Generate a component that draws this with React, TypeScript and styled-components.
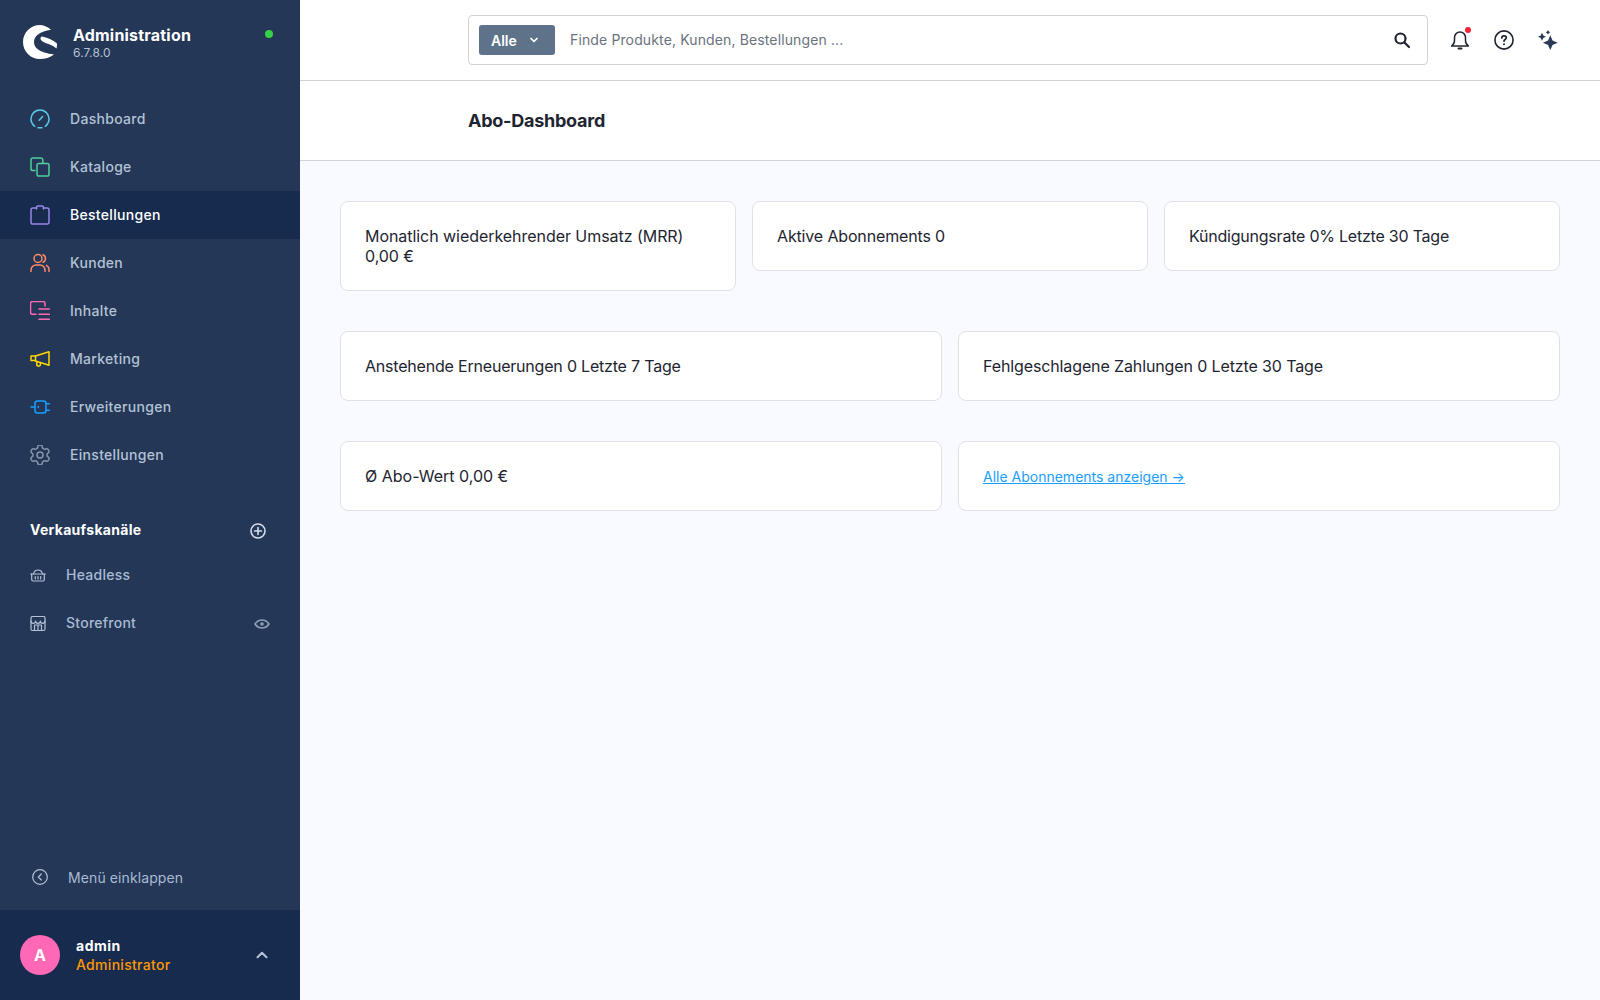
import styled, { createGlobalStyle } from "styled-components";
import type { ReactNode } from "react";
import { ChevronDown, ChevronUp, Settings } from "lucide-react";

const GlobalStyle = createGlobalStyle`
  html, body {
    margin: 0;
    padding: 0;
    height: 100%;
    font-family: Inter, "Noto Sans", sans-serif;
    color: #1e2530;
    background: #f9faff;
  }
  * { box-sizing: border-box; }
`;

const Layout = styled.div`
  display: flex;
  height: 100vh;
  overflow: hidden;
`;

const Sidebar = styled.aside`
  width: 300px;
  flex: none;
  display: flex;
  flex-direction: column;
  background: #243757;
`;

const Brand = styled.div`
  height: 95px;
  padding: 25px 27px 0 23px;
  display: flex;
  align-items: flex-start;
`;

const BrandText = styled.div`
  margin-left: 16px;
  flex: 1;
`;

const BrandName = styled.div`
  font-size: 16px;
  font-weight: 700;
  line-height: 20px;
  letter-spacing: 0.2px;
  color: #fff;
`;

const BrandVersion = styled.div`
  font-size: 12px;
  line-height: 16px;
  letter-spacing: 0.15px;
  color: #b3c2d6;
`;

const StatusDot = styled.span`
  width: 8px;
  height: 8px;
  margin-top: 5px;
  border-radius: 50%;
  background: #37d046;
`;

const NavItem = styled.div<{ $active?: boolean }>`
  height: 48px;
  padding-left: 30px;
  display: flex;
  align-items: center;
  gap: 20px;
  font-size: 14px;
  font-weight: 500;
  letter-spacing: 0.3px;
  color: ${(p) => (p.$active ? "#fff" : "#b3c2d6")};
  background: ${(p) => (p.$active ? "#172b4f" : "transparent")};
  svg {
    flex: none;
  }
`;

const NavLabel = styled.span`
  margin-bottom: 2px;
`;

const SectionHead = styled.div`
  margin-top: 30px;
  height: 43px;
  padding: 0 34px 0 30px;
  display: flex;
  align-items: center;
  justify-content: space-between;
  font-size: 14px;
  font-weight: 700;
  letter-spacing: 0.3px;
  color: #fff;
`;

const ChannelItem = styled.div`
  height: 48px;
  padding: 0 30px 0 30px;
  display: flex;
  align-items: center;
  gap: 20px;
  font-size: 14px;
  font-weight: 500;
  letter-spacing: 0.25px;
  color: #a9bbd3;
`;

const ChannelLabel = styled.span`
  flex: 1;
  margin-bottom: 4px;
`;

const Collapse = styled.div`
  margin-top: auto;
  height: 66px;
  padding-left: 32px;
  display: flex;
  align-items: center;
  gap: 20px;
  font-size: 14px;
  letter-spacing: 0.1px;
  color: #a9bbd3;
`;

const UserBar = styled.div`
  height: 90px;
  padding: 0 29px 0 20px;
  display: flex;
  align-items: center;
  background: #172b4f;
`;

const Avatar = styled.div`
  width: 40px;
  height: 40px;
  flex: none;
  border-radius: 50%;
  display: flex;
  align-items: center;
  justify-content: center;
  font-size: 16px;
  font-weight: 700;
  color: #fff;
  background: #ff68b4;
`;

const UserInfo = styled.div`
  flex: 1;
  margin-left: 16px;
`;

const UserName = styled.div`
  font-size: 14px;
  font-weight: 700;
  line-height: 19px;
  letter-spacing: 0.5px;
  color: #fff;
`;

const UserRole = styled.div`
  font-size: 14px;
  font-weight: 500;
  line-height: 19px;
  letter-spacing: 0.3px;
  color: #ff9800;
`;

const Main = styled.main`
  flex: 1;
  display: flex;
  flex-direction: column;
  min-width: 0;
`;

const TopBar = styled.header`
  height: 81px;
  flex: none;
  padding: 15px 32px 0 168px;
  display: flex;
  align-items: flex-start;
  background: #fff;
  border-bottom: 1px solid #d1d1d6;
`;

const SearchBox = styled.div`
  width: 960px;
  height: 50px;
  padding: 0 16px 0 10px;
  display: flex;
  align-items: center;
  border: 1px solid #d1d1d6;
  border-radius: 4px;
  background: #fff;
`;

const TypeButton = styled.div`
  width: 76px;
  height: 30px;
  padding: 0 15px 0 12px;
  display: flex;
  align-items: center;
  justify-content: space-between;
  border-radius: 3px;
  font-size: 14px;
  font-weight: 600;
  color: #fff;
  background: #5e7389;
`;

const Placeholder = styled.div`
  flex: 1;
  margin: 0 0 2px 15px;
  font-size: 14px;
  letter-spacing: 0.13px;
  color: #6b7280;
`;

const TopActions = styled.div`
  margin-left: 20px;
  height: 50px;
  display: flex;
  align-items: center;
  gap: 20px;
`;

const ActionIcon = styled.div`
  position: relative;
  width: 24px;
  height: 24px;
  display: flex;
  align-items: center;
  justify-content: center;
  color: #1e2530;
`;

const Badge = styled.span`
  position: absolute;
  top: -1px;
  right: 1px;
  width: 6px;
  height: 6px;
  border-radius: 50%;
  background: #f0252f;
`;

const PageHeader = styled.div`
  height: 80px;
  flex: none;
  padding-left: 168px;
  display: flex;
  align-items: center;
  background: #fff;
  border-bottom: 1px solid #d1d1d6;
`;

const PageTitle = styled.h1`
  margin: 0;
  font-size: 18px;
  font-weight: 700;
  letter-spacing: -0.25px;
  color: #1e2530;
`;

const Content = styled.div`
  flex: 1;
  padding: 40px;
  display: flex;
  flex-direction: column;
  gap: 40px;
  background: #f9faff;
`;

const CardRow = styled.div<{ $columns: number }>`
  display: grid;
  grid-template-columns: repeat(${(p) => p.$columns}, 1fr);
  gap: 16px;
  align-items: start;
`;

const Card = styled.div<{ $track?: number }>`
  padding: 24px;
  font-size: 16px;
  line-height: 20px;
  letter-spacing: ${(p) => p.$track ?? 0}px;
  color: #1e2530;
  background: #fff;
  border: 1px solid #e0e0e8;
  border-radius: 8px;
`;

const CardLink = styled.a`
  display: block;
  margin-bottom: -2px;
  font-size: 14px;
  line-height: 22px;
  color: #189eff;
  text-decoration: underline;
`;

const Line = ({ color, children }: { color: string; children: ReactNode }) => (
  <svg
    width="20"
    height="20"
    viewBox="0 0 20 20"
    fill="none"
    stroke={color}
    strokeWidth="1.5"
    strokeLinecap="round"
    strokeLinejoin="round"
  >
    {children}
  </svg>
);

const Small = ({ color, width = 1.2, children }: { color: string; width?: number; children: ReactNode }) => (
  <svg
    width="16"
    height="16"
    viewBox="0 0 16 16"
    fill="none"
    stroke={color}
    strokeWidth={width}
    strokeLinecap="round"
    strokeLinejoin="round"
  >
    {children}
  </svg>
);

const Logo = () => (
  <svg width="34" height="34" viewBox="0 0 34 34" fill="#fff">
    <path d="M28 4.700C24 1.500 20.500 0 17 0 7.500 0 0 7.600 0 17c0 9.500 7.500 17 17 17 5 0 10-1.500 14-4.500-7-1-13-2.500-16.500-5.500C12 22 11 19.500 11 17 11 11 17 6 28 4.700Z" />
    <path d="M19 11.500c-1.500.5-2 2-1 3.500 2 2.500 8 4 11 5.500 2 1 4 2.500 4.500 3 .5-1.500.5-3.500.5-5-4-3.500-10-6-15-7Z" />
  </svg>
);

const DashboardIcon = () => (
  <Line color="#5ccbe8">
    <path d="M4.700 17.300A9 9 0 1 1 15.300 17.300" />
    <path d="M8 18.800h4" />
    <path d="M9.200 11.300 12.600 7.500" />
  </Line>
);

const CatalogIcon = () => (
  <Line color="#4fcf9a">
    <path d="M5 13.500H2.800A1.800 1.800 0 0 1 1 11.700V2.800A1.800 1.800 0 0 1 2.800 1h8A1.800 1.800 0 0 1 12.800 2.800V6" />
    <rect x="7" y="6.500" width="12" height="12.500" rx="1.800" />
  </Line>
);

const OrdersIcon = () => (
  <Line color="#9a87e6">
    <path d="M6.500 3H2.800A1.800 1.800 0 0 0 1 4.800v12.400A1.800 1.800 0 0 0 2.800 19h14.400a1.800 1.800 0 0 0 1.800-1.800V4.800A1.800 1.800 0 0 0 17.200 3h-3.700" />
    <path d="M6.500 4V2.500A1.500 1.500 0 0 1 8 1h4a1.500 1.500 0 0 1 1.500 1.500V4" />
  </Line>
);

const CustomersIcon = () => (
  <Line color="#ff8a66">
    <circle cx="8" cy="5.500" r="4" />
    <path d="M1 18.500v-1.500a5 5 0 0 1 5-5h4a5 5 0 0 1 5 5v1.500" />
    <path d="M13 1.800a4 4 0 0 1 0 7.400" />
    <path d="M16.500 12.300a5 5 0 0 1 2.500 4.700v1.500" />
  </Line>
);

const ContentIcon = () => (
  <Line color="#ff68b4">
    <path d="M6 13.300H2.500a2 2 0 0 1-2-2V2.500a2 2 0 0 1 2-2H13a2 2 0 0 1 2 2V5" />
    <path d="M9 8h10.300M9 13.300h10.300M9 18.300h10.300" />
  </Line>
);

const MarketingIcon = () => (
  <Line color="#ffd700">
    <path d="M5.500 7 19 2.700v13.600L5.500 12Z" />
    <path d="M5.500 7H1v4.500h4.500" />
    <path d="M6.800 12.500v2.500a1.800 1.800 0 0 0 3.600.6v-1.500" />
  </Line>
);

const ExtensionsIcon = () => (
  <Line color="#189eff">
    <rect x="5" y="4" width="11" height="12" rx="2.500" />
    <path d="M1 10h4M16 6.700h3.500M16 13.300h3.500" />
    <path d="M8.300 9.600v.8" />
  </Line>
);

const BasketIcon = () => (
  <Small color="#b3c2d6">
    <path d="M.7 6h14.600" />
    <path d="M1.700 6v5.500A1.500 1.500 0 0 0 3.200 13h9.600a1.500 1.500 0 0 0 1.500-1.500V6" />
    <path d="M3.500 6C4 3.500 5.500 2 8 2s4 1.500 4.500 4" />
    <path d="M5.300 8.500V11M8 8.500V11M10.700 8.500V11" />
  </Small>
);

const StoreIcon = () => (
  <Small color="#b3c2d6">
    <rect x="1" y="0.500" width="14" height="14" rx="1.500" />
    <path d="M1 5a2.300 2.300 0 0 0 4.600 0 2.300 2.300 0 0 0 4.800 0A2.300 2.300 0 0 0 15 5" />
    <path d="M4.500 14.500V9h7v5.500M8 9v5.500" />
  </Small>
);

const EyeIcon = () => (
  <Small color="#8fa0b8" width={1.6}>
    <path d="M1 8c1.800-2.700 4.200-4 7-4s5.200 1.300 7 4c-1.800 2.700-4.200 4-7 4s-5.200-1.300-7-4Z" />
    <circle cx="8" cy="8" r="1" fill="#8fa0b8" />
  </Small>
);

const PlusCircle = () => (
  <Small color="#d5deea" width={1.6}>
    <circle cx="8" cy="8" r="7" />
    <path d="M8 4.500v7M4.500 8h7" />
  </Small>
);

const CollapseIcon = () => (
  <Small color="#b3c2d6">
    <circle cx="8" cy="8" r="7.300" />
    <path d="M9.300 5 6.300 8l3 3" />
  </Small>
);

const SearchIcon = () => (
  <svg width="18" height="18" viewBox="0 0 18 18" fill="none" stroke="#1e2530" strokeWidth="2.200" strokeLinecap="round">
    <circle cx="7.500" cy="7.500" r="5" />
    <path d="M11.500 11.500 16 16" />
  </svg>
);

const BellIcon = () => (
  <svg width="20" height="20" viewBox="0 0 20 20" fill="none" stroke="#1e2530" strokeWidth="1.500" strokeLinecap="round" strokeLinejoin="round">
    <path d="M1.500 16h17c-1.700-1.200-3-2.700-3-5.500V7.500a5.500 5.500 0 0 0-11 0v3c0 2.800-1.300 4.300-3 5.500Z" />
    <path d="M8.500 18.500h3" strokeWidth="2" />
  </svg>
);

const HelpIcon = () => (
  <svg width="20" height="20" viewBox="0 0 20 20" fill="none" stroke="#1e2530" strokeLinecap="round">
    <circle cx="10" cy="10" r="9.100" strokeWidth="1.600" />
    <path d="M7.800 8c0-1.400 1-2.200 2.300-2.200s2.200.9 2.200 2c0 1.800-2.300 1.700-2.300 3.400" strokeWidth="1.700" />
    <circle cx="10" cy="14.300" r="1" fill="#1e2530" stroke="none" />
  </svg>
);

const SparkleIcon = () => (
  <svg width="20" height="20" viewBox="0 0 20 20" fill="#2b3a55">
    <path d="M12.300 5.300 14.500 10.500 19.700 12.700 14.500 14.900 12.300 20.100 10.100 14.900 4.900 12.700 10.100 10.500Z" />
    <path d="M4 2.700 5.300 5.400 8 6.700 5.300 8 4 10.700 2.700 8 0 6.700 2.700 5.400Z" />
    <path d="M10 0 10.900 1.400 12.300 2.300 10.900 3.200 10 4.600 9.100 3.200 7.700 2.300 9.100 1.400Z" />
  </svg>
);

const navItems: { label: string; icon: ReactNode; active?: boolean }[] = [
  { label: "Dashboard", icon: <DashboardIcon /> },
  { label: "Kataloge", icon: <CatalogIcon /> },
  { label: "Bestellungen", icon: <OrdersIcon />, active: true },
  { label: "Kunden", icon: <CustomersIcon /> },
  { label: "Inhalte", icon: <ContentIcon /> },
  { label: "Marketing", icon: <MarketingIcon /> },
  { label: "Erweiterungen", icon: <ExtensionsIcon /> },
  { label: "Einstellungen", icon: <Settings size={20} viewBox="2 2 20 20" color="#8595aa" strokeWidth={1.5} /> },
];

export default function App() {
  return (
    <>
      <GlobalStyle />
      <Layout>
        <Sidebar>
          <Brand>
            <Logo />
            <BrandText>
              <BrandName>Administration</BrandName>
              <BrandVersion>6.7.8.0</BrandVersion>
            </BrandText>
            <StatusDot />
          </Brand>
          <nav>
            {navItems.map((item) => (
              <NavItem key={item.label} $active={item.active}>
                {item.icon}
                <NavLabel>{item.label}</NavLabel>
              </NavItem>
            ))}
          </nav>
          <SectionHead>
            <NavLabel>Verkaufskanäle</NavLabel>
            <PlusCircle />
          </SectionHead>
          <ChannelItem>
            <BasketIcon />
            <ChannelLabel>Headless</ChannelLabel>
          </ChannelItem>
          <ChannelItem>
            <StoreIcon />
            <ChannelLabel>Storefront</ChannelLabel>
            <EyeIcon />
          </ChannelItem>
          <Collapse>
            <CollapseIcon />
            Menü einklappen
          </Collapse>
          <UserBar>
            <Avatar>A</Avatar>
            <UserInfo>
              <UserName>admin</UserName>
              <UserRole>Administrator</UserRole>
            </UserInfo>
            <ChevronUp size={18} color="#b3c2d6" strokeWidth={2.8} />
          </UserBar>
        </Sidebar>
        <Main>
          <TopBar>
            <SearchBox>
              <TypeButton>
                Alle
                <ChevronDown size={12} strokeWidth={3.5} />
              </TypeButton>
              <Placeholder>Finde Produkte, Kunden, Bestellungen ...</Placeholder>
              <SearchIcon />
            </SearchBox>
            <TopActions>
              <ActionIcon>
                <BellIcon />
                <Badge />
              </ActionIcon>
              <ActionIcon>
                <HelpIcon />
              </ActionIcon>
              <ActionIcon>
                <SparkleIcon />
              </ActionIcon>
            </TopActions>
          </TopBar>
          <PageHeader>
            <PageTitle>Abo-Dashboard</PageTitle>
          </PageHeader>
          <Content>
            <CardRow $columns={3}>
              <Card $track={-0.05}>
                Monatlich wiederkehrender Umsatz (MRR)
                <br />
                0,00 €
              </Card>
              <Card $track={-0.15}>Aktive Abonnements 0</Card>
              <Card $track={-0.22}>Kündigungsrate 0% Letzte 30 Tage</Card>
            </CardRow>
            <CardRow $columns={2}>
              <Card $track={-0.2}>Anstehende Erneuerungen 0 Letzte 7 Tage</Card>
              <Card $track={-0.12}>Fehlgeschlagene Zahlungen 0 Letzte 30 Tage</Card>
            </CardRow>
            <CardRow $columns={2}>
              <Card>Ø Abo-Wert 0,00 €</Card>
              <Card>
                <CardLink href="#">Alle Abonnements anzeigen →</CardLink>
              </Card>
            </CardRow>
          </Content>
        </Main>
      </Layout>
    </>
  );
}
